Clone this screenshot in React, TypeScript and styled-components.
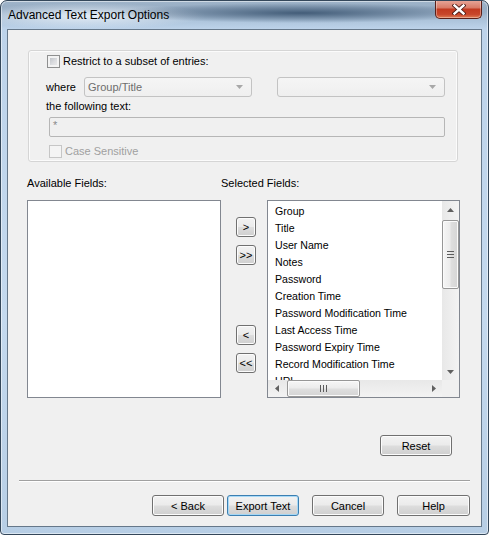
import React from 'react';
import styled, { createGlobalStyle } from 'styled-components';

const GlobalStyle = createGlobalStyle`
  html, body {
    margin: 0;
    padding: 0;
    background: #ffffff;
  }
  body {
    font-family: "Liberation Sans", Arial, sans-serif;
    font-size: 11px;
    color: #000000;
  }
  * {
    box-sizing: border-box;
  }
`;

const Window = styled.div`
  width: 489px;
  height: 535px;
  display: flex;
  flex-direction: column;
  padding: 0 6px 7px 6px;
  border: 1px solid #34475a;
  border-radius: 7px 7px 4px 4px;
  overflow: hidden;
  background:
    radial-gradient(ellipse 190px 10px at 300px 12px, rgba(62, 88, 116, 0.95), rgba(62, 88, 116, 0)),
    radial-gradient(ellipse 120px 13px at 85px 15px, rgba(236, 243, 250, 0.9), rgba(236, 243, 250, 0)),
    linear-gradient(180deg, #9fb4c9 0px, #97adc4 8px, #aec5dc 20px, #bdd3ea 28px, #c4d9ee 60%, #b7cee5 100%);
  box-shadow: inset 0 0 0 1px rgba(255, 255, 255, 0.5);
`;

const TitleBar = styled.div`
  height: 28px;
  display: flex;
  align-items: flex-start;
  justify-content: space-between;
`;

const Title = styled.span`
  margin: 7px 0 0 1px;
  font-size: 12px;
  line-height: 14px;
  color: #000000;
`;

const CloseButton = styled.div`
  width: 47px;
  height: 19px;
  margin-top: -1px;
  display: flex;
  align-items: center;
  justify-content: center;
  border: 1px solid #5b2019;
  border-top: none;
  border-radius: 0 0 5px 5px;
  background: linear-gradient(180deg, #e8a99c 0%, #d97c68 42%, #c23a20 52%, #c8462b 80%, #e07d55 100%);
  box-shadow: inset 0 0 0 1px rgba(255, 255, 255, 0.35);
`;

const Client = styled.div`
  flex: 1;
  display: flex;
  flex-direction: column;
  background: #f0f0f0;
  border: 1px solid #66788a;
`;

const GroupBox = styled.div`
  width: 430px;
  height: 112px;
  margin: 20px 0 0 20px;
  padding-top: 4px;
  display: flex;
  flex-direction: column;
  border: 1px solid #d5d5d5;
  border-radius: 3px;
  box-shadow: inset 0 0 0 1px #fbfbfb;
`;

const CheckRow = styled.div<{ $indent: number; $top?: number; $disabled?: boolean }>`
  height: 13px;
  margin: ${p => p.$top ?? 0}px 0 0 ${p => p.$indent}px;
  display: flex;
  align-items: center;
  gap: 3px;
  line-height: 13px;
  color: ${p => (p.$disabled ? '#a0a0a0' : '#000000')};
`;

const CheckBox = styled.span<{ $disabled?: boolean }>`
  width: 13px;
  height: 13px;
  flex: none;
  border: 1px solid ${p => (p.$disabled ? '#c6c6c6' : '#8e8f8f')};
  background: ${p =>
    p.$disabled ? '#f4f4f4' : 'linear-gradient(135deg, #b4b9bf 0%, #dcdde0 55%, #f0f0f0 100%)'};
  box-shadow: inset 0 0 0 2px ${p => (p.$disabled ? '#f4f4f4' : '#f3f3f3')};
`;

const WhereRow = styled.div`
  height: 20px;
  margin: 9px 0 0 17px;
  display: flex;
  align-items: center;
`;

const WhereLabel = styled.span`
  width: 38px;
`;

const Combo = styled.div<{ $gap?: number }>`
  width: 168px;
  height: 20px;
  margin-left: ${p => p.$gap ?? 0}px;
  padding: 0 8px 0 3px;
  display: flex;
  align-items: center;
  justify-content: space-between;
  border: 1px solid #c3c3c3;
  border-radius: 3px;
  background: linear-gradient(180deg, #f5f5f5 0%, #efefef 100%);
  color: #6d6d6d;
`;

const FieldLabel = styled.div<{ $top?: number; $indent?: number }>`
  margin: ${p => p.$top ?? 0}px 0 0 ${p => p.$indent ?? 0}px;
  line-height: 13px;
  white-space: nowrap;
`;

const TextBox = styled.div`
  width: 396px;
  height: 20px;
  margin: 4px 0 0 20px;
  padding: 1px 3px;
  border: 1px solid #b6b6b6;
  border-radius: 2px;
  background: #f0f0f0;
  color: #8a8a8a;
  line-height: 13px;
`;

const Fields = styled.div`
  margin: 15px 0 0 19px;
  display: grid;
  grid-template-columns: 194px 46px 193px;
  grid-template-rows: 13px 198px;
  row-gap: 10px;
`;

const SelectedLabel = styled(FieldLabel)`
  grid-column: 2 / 4;
`;

const ListBox = styled.div`
  border: 1px solid #828790;
  background: #ffffff;
`;

const MoveColumn = styled.div`
  padding: 17px 0 0 15px;
  display: flex;
  flex-direction: column;
  align-items: flex-start;
`;

const Button = styled.button<{ $width: number; $height?: number; $gap?: number; $default?: boolean }>`
  width: ${p => p.$width}px;
  height: ${p => p.$height ?? 21}px;
  margin: 0;
  margin-left: ${p => p.$gap ?? 0}px;
  padding: 0;
  flex: none;
  font-family: "Liberation Sans", Arial, sans-serif;
  font-size: 11px;
  color: #000000;
  border: 1px solid ${p => (p.$default ? '#3c7fb1' : '#707070')};
  border-radius: 3px;
  background: linear-gradient(180deg, #f2f2f2 0%, #ebebeb 48%, #dddddd 52%, #cfcfcf 100%);
  box-shadow: inset 0 0 0 1px ${p => (p.$default ? 'rgba(160, 215, 248, 0.9)' : '#fcfcfc')};
`;

const MoveButton = styled(Button)<{ $top: number }>`
  margin-top: ${p => p.$top}px;
`;

const SelectedList = styled(ListBox)`
  display: grid;
  grid-template-columns: 1fr 17px;
  grid-template-rows: 1fr 17px;
  overflow: hidden;
`;

const Items = styled.div`
  padding: 2px 0 0 7px;
  overflow: hidden;
`;

const Item = styled.div`
  height: 17px;
  line-height: 17px;
  font-size: 10.6px;
  white-space: nowrap;
`;

const VScroll = styled.div`
  display: flex;
  flex-direction: column;
  background: linear-gradient(90deg, #e8e8e8 0%, #f3f3f3 100%);
`;

const HScroll = styled.div`
  display: flex;
  background: linear-gradient(180deg, #e8e8e8 0%, #f3f3f3 100%);
`;

const ArrowCell = styled.div`
  width: 17px;
  height: 17px;
  flex: none;
  display: flex;
  align-items: center;
  justify-content: center;
`;

const Track = styled.div<{ $horizontal?: boolean }>`
  flex: 1;
  display: flex;
  flex-direction: ${p => (p.$horizontal ? 'row' : 'column')};
  padding: ${p => (p.$horizontal ? '0 0 0 2px' : '2px 0 0 0')};
`;

const Thumb = styled.div<{ $horizontal?: boolean }>`
  width: ${p => (p.$horizontal ? '73px' : '100%')};
  height: ${p => (p.$horizontal ? '100%' : '69px')};
  display: flex;
  align-items: center;
  justify-content: center;
  border: 1px solid #979797;
  border-radius: 2px;
  background: ${p =>
    p.$horizontal
      ? 'linear-gradient(180deg, #f6f6f6 0%, #ececec 45%, #dedede 55%, #d5d5d5 100%)'
      : 'linear-gradient(90deg, #f6f6f6 0%, #ececec 45%, #dedede 55%, #d5d5d5 100%)'};
  box-shadow: inset 0 0 0 1px #fbfbfb;
`;

const Corner = styled.div`
  background: #f0f0f0;
`;

const ResetButton = styled(Button)`
  align-self: flex-end;
  margin: 37px 29px 0 0;
`;

const Separator = styled.div`
  height: 2px;
  margin: 24px 11px 0 11px;
  border-top: 1px solid #a0a0a0;
  border-bottom: 1px solid #ffffff;
`;

const ButtonRow = styled.div`
  margin: 13px 11px 0 0;
  display: flex;
  justify-content: flex-end;
`;

const Arrow = ({ dir }: { dir: 'up' | 'down' | 'left' | 'right' }) => {
  const points = {
    up: '0,4 3.5,0 7,4',
    down: '0,0 3.5,4 7,0',
    left: '4,0 0,3.5 4,7',
    right: '0,0 4,3.5 0,7',
  }[dir];
  const vertical = dir === 'up' || dir === 'down';
  return (
    <svg width={vertical ? 7 : 4} height={vertical ? 4 : 7} viewBox={vertical ? '0 0 7 4' : '0 0 4 7'}>
      <polygon points={points} fill="#606060" />
    </svg>
  );
};

const Grip = ({ horizontal }: { horizontal?: boolean }) =>
  horizontal ? (
    <svg width="7" height="7" viewBox="0 0 7 7">
      <path d="M0.5 0v7M3.5 0v7M6.5 0v7" stroke="#5c5c5c" strokeWidth="1" />
    </svg>
  ) : (
    <svg width="7" height="7" viewBox="0 0 7 7">
      <path d="M0 0.5h7M0 3.5h7M0 6.5h7" stroke="#5c5c5c" strokeWidth="1" />
    </svg>
  );

const ComboArrow = () => (
  <svg width="7" height="4" viewBox="0 0 7 4">
    <polygon points="0,0 3.5,4 7,0" fill="#a8a8a8" />
  </svg>
);

const CloseGlyph = () => (
  <svg width="14" height="11" viewBox="0 0 14 11">
    <path d="M2.5 1.5 L11.5 9.5 M11.5 1.5 L2.5 9.5" stroke="#4a1a14" strokeWidth="4.2" strokeLinecap="square" />
    <path d="M2.5 1.5 L11.5 9.5 M11.5 1.5 L2.5 9.5" stroke="#ffffff" strokeWidth="2.4" strokeLinecap="square" />
  </svg>
);

const selectedFields = [
  'Group',
  'Title',
  'User Name',
  'Notes',
  'Password',
  'Creation Time',
  'Password Modification Time',
  'Last Access Time',
  'Password Expiry Time',
  'Record Modification Time',
  'URL',
];

export default function App() {
  return (
    <>
      <GlobalStyle />
      <Window>
        <TitleBar>
          <Title>Advanced Text Export Options</Title>
          <CloseButton>
            <CloseGlyph />
          </CloseButton>
        </TitleBar>
        <Client>
          <GroupBox>
            <CheckRow $indent={18}>
              <CheckBox />
              <span>Restrict to a subset of entries:</span>
            </CheckRow>
            <WhereRow>
              <WhereLabel>where</WhereLabel>
              <Combo>
                <span>Group/Title</span>
                <ComboArrow />
              </Combo>
              <Combo $gap={25}>
                <span />
                <ComboArrow />
              </Combo>
            </WhereRow>
            <FieldLabel $top={3} $indent={17}>
              the following text:
            </FieldLabel>
            <TextBox>*</TextBox>
            <CheckRow $indent={20} $top={8} $disabled>
              <CheckBox $disabled />
              <span>Case Sensitive</span>
            </CheckRow>
          </GroupBox>

          <Fields>
            <FieldLabel>Available Fields:</FieldLabel>
            <SelectedLabel>Selected Fields:</SelectedLabel>
            <ListBox />
            <MoveColumn>
              <MoveButton $width={20} $height={20} $top={0}>&gt;</MoveButton>
              <MoveButton $width={20} $height={20} $top={8}>&gt;&gt;</MoveButton>
              <MoveButton $width={20} $height={20} $top={60}>&lt;</MoveButton>
              <MoveButton $width={20} $height={20} $top={8}>&lt;&lt;</MoveButton>
            </MoveColumn>
            <SelectedList>
              <Items>
                {selectedFields.map(field => (
                  <Item key={field}>{field}</Item>
                ))}
              </Items>
              <VScroll>
                <ArrowCell>
                  <Arrow dir="up" />
                </ArrowCell>
                <Track>
                  <Thumb>
                    <Grip />
                  </Thumb>
                </Track>
                <ArrowCell>
                  <Arrow dir="down" />
                </ArrowCell>
              </VScroll>
              <HScroll>
                <ArrowCell>
                  <Arrow dir="left" />
                </ArrowCell>
                <Track $horizontal>
                  <Thumb $horizontal>
                    <Grip horizontal />
                  </Thumb>
                </Track>
                <ArrowCell>
                  <Arrow dir="right" />
                </ArrowCell>
              </HScroll>
              <Corner />
            </SelectedList>
          </Fields>

          <ResetButton $width={72}>Reset</ResetButton>
          <Separator />
          <ButtonRow>
            <Button $width={72}>&lt; Back</Button>
            <Button $width={72} $gap={3} $default>
              Export Text
            </Button>
            <Button $width={72} $gap={13}>
              Cancel
            </Button>
            <Button $width={73} $gap={13}>
              Help
            </Button>
          </ButtonRow>
        </Client>
      </Window>
    </>
  );
}
